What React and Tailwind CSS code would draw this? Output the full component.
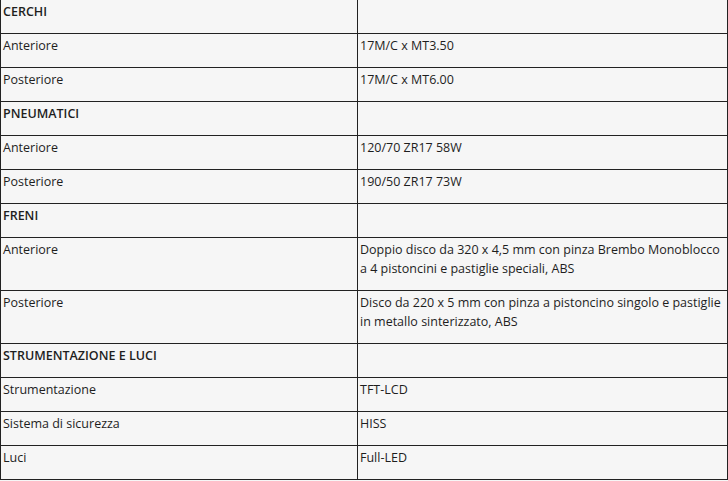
import React from "react";

const rows = [
  { h: true, a: "CERCHI", b: "" },
  { a: "Anteriore", b: "17M/C x MT3.50" },
  { a: "Posteriore", b: "17M/C x MT6.00" },
  { h: true, a: "PNEUMATICI", b: "" },
  { a: "Anteriore", b: "120/70 ZR17 58W" },
  { a: "Posteriore", b: "190/50 ZR17 73W" },
  { h: true, a: "FRENI", b: "" },
  { a: "Anteriore", b: "Doppio disco da 320 x 4,5 mm con pinza Brembo Monoblocco a 4 pistoncini e pastiglie speciali, ABS" },
  { a: "Posteriore", b: "Disco da 220 x 5 mm con pinza a pistoncino singolo e pastiglie in metallo sinterizzato, ABS" },
  { h: true, a: "STRUMENTAZIONE E LUCI", b: "" },
  { a: "Strumentazione", b: "TFT-LCD" },
  { a: "Sistema di sicurezza", b: "HISS" },
  { a: "Luci", b: "Full-LED" },
];

export default function App() {
  return (
    <div className="w-[728px] h-[481px] overflow-hidden bg-[#f6f6f6] text-[#1e1e1e]" style={{ fontFamily: '"Open Sans", "Liberation Sans", sans-serif' }}>
      <table className="w-[727px] border-collapse table-fixed -mt-px">
        <colgroup>
          <col className="w-[357px]" />
          <col className="w-[370px]" />
        </colgroup>
        <tbody>
          {rows.map((r, i) => (
            <tr key={i}>
              <td className={`border border-[#222] align-top pl-[2px] pt-[2px] pb-[12px] text-[12.5px] leading-[19px] ${r.h ? "font-semibold" : ""}`}>
                {r.a}
              </td>
              <td className="border border-[#222] align-top pl-[2px] pr-[6px] pt-[2px] pb-[12px] text-[12.5px] leading-[19px]">
                {r.b}
              </td>
            </tr>
          ))}
        </tbody>
      </table>
    </div>
  );
}
